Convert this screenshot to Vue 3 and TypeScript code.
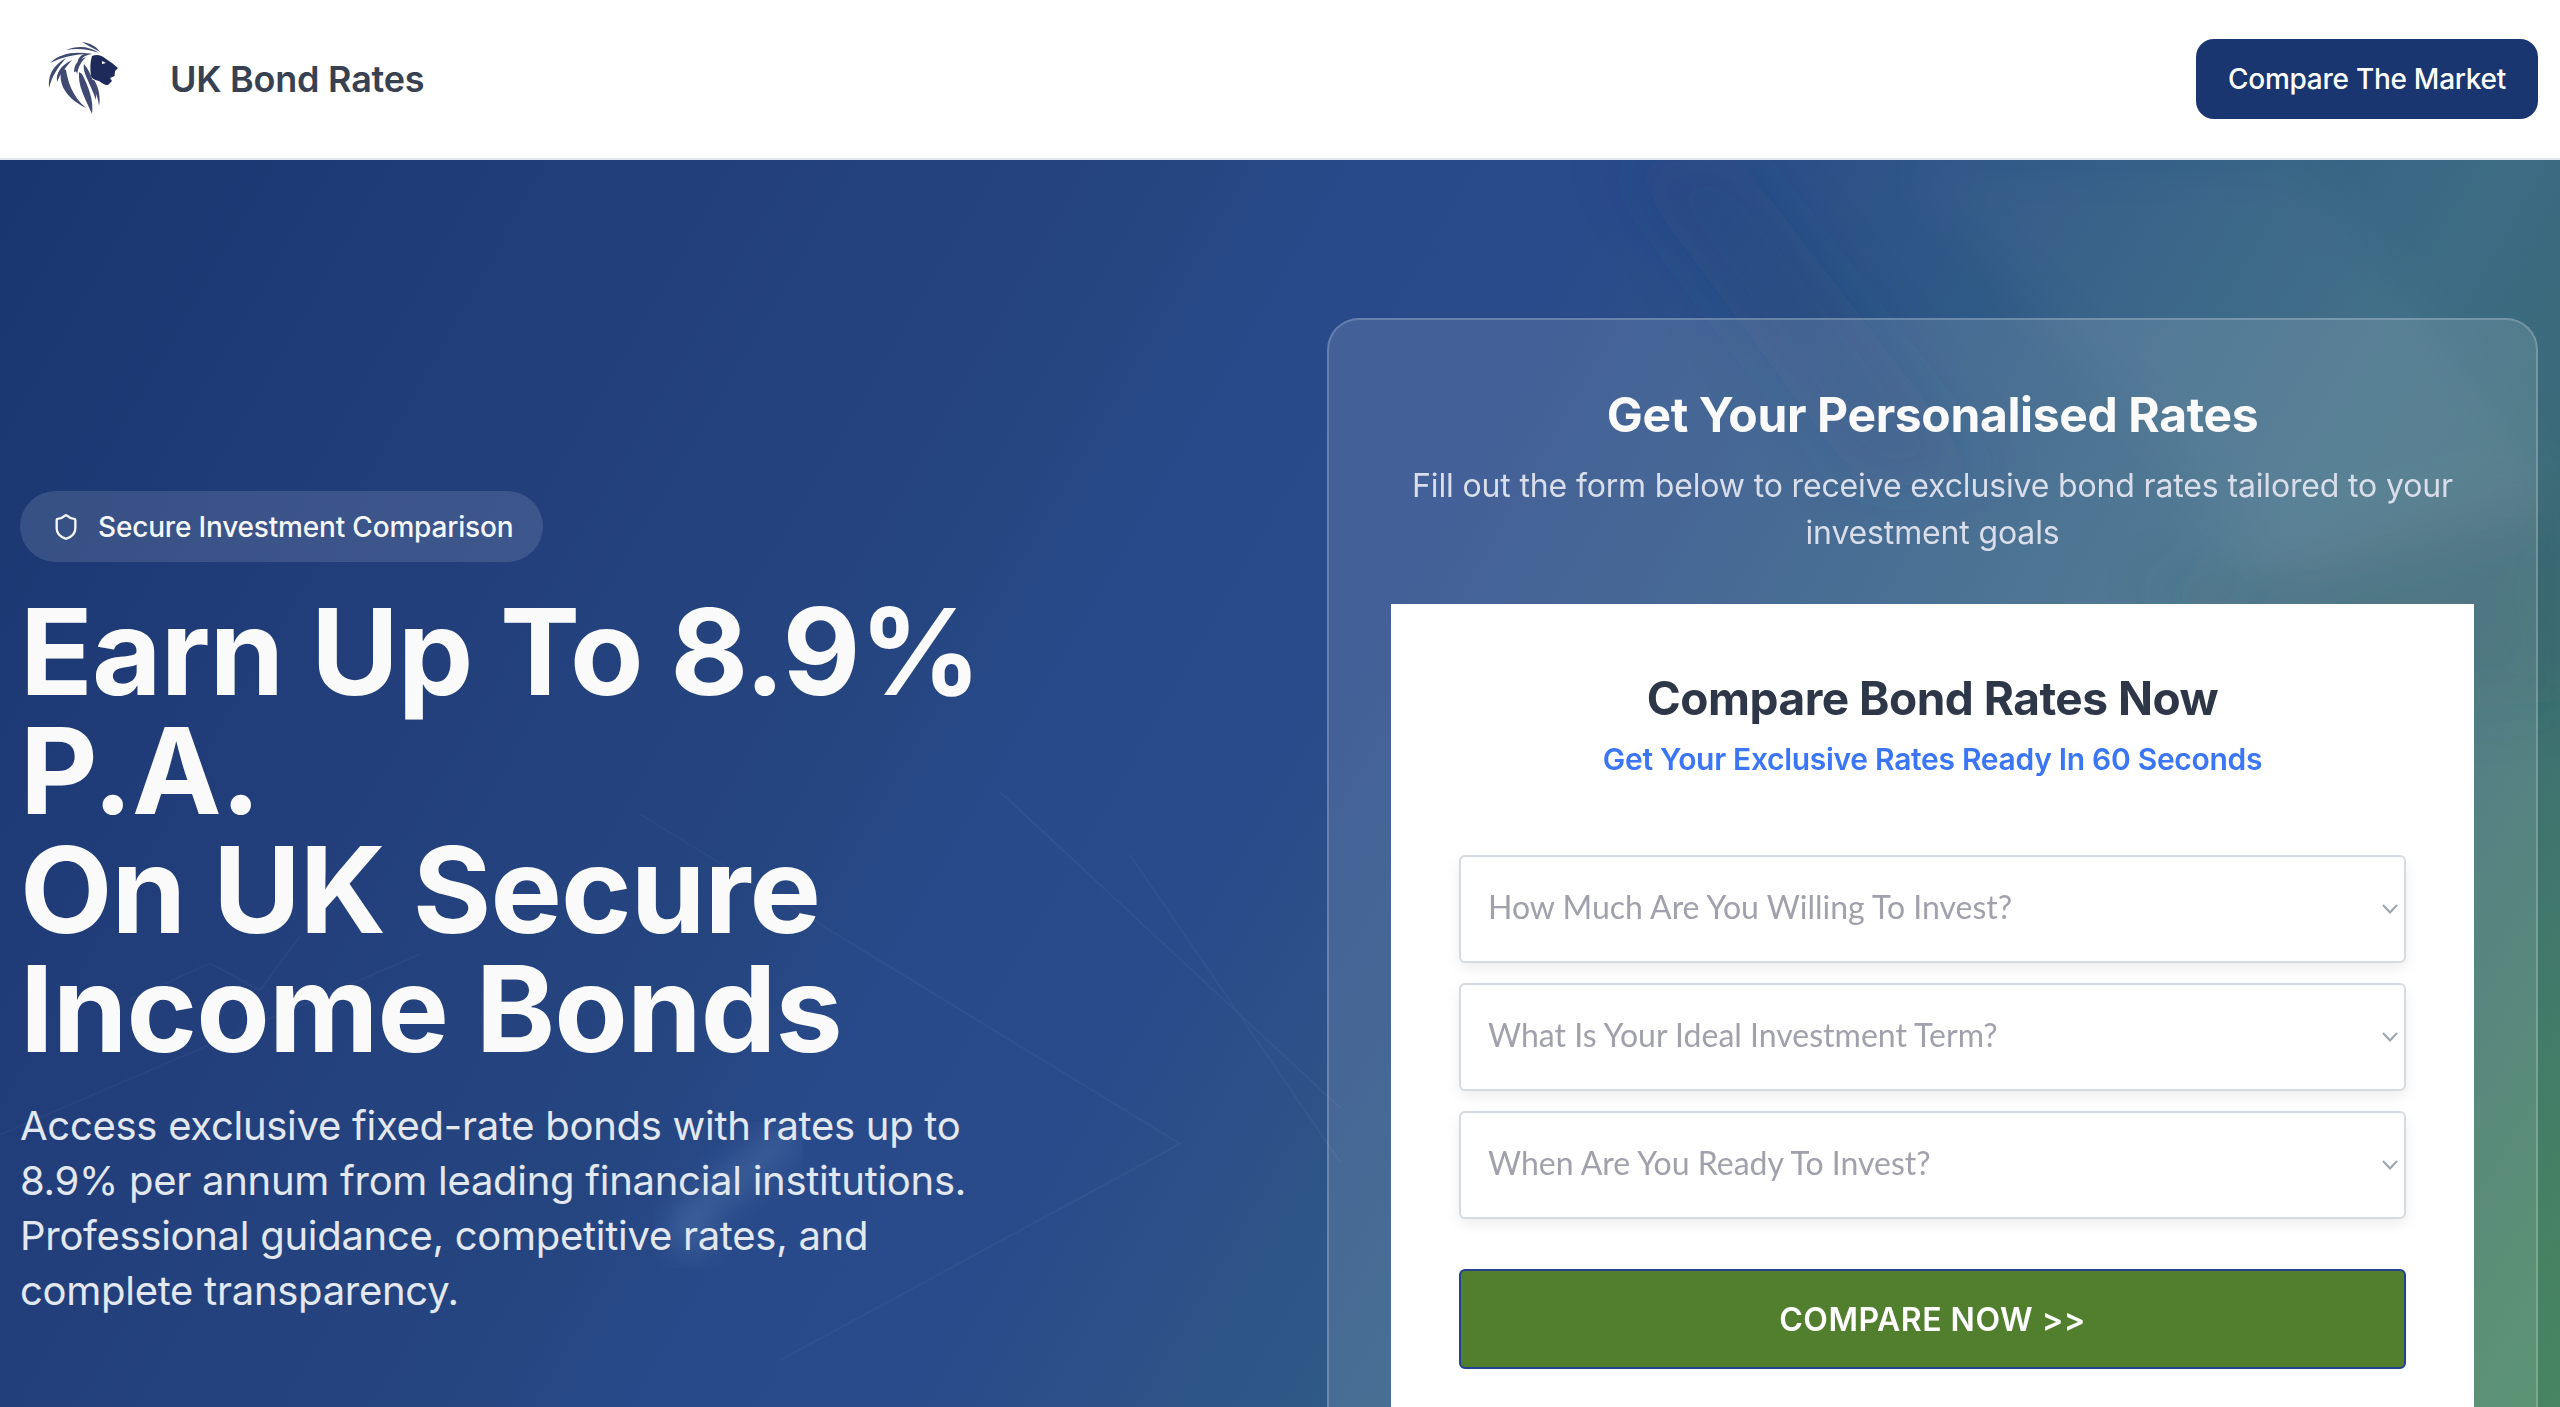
<script setup lang="ts">
const questions: string[] = [
  'How Much Are You Willing To Invest?',
  'What Is Your Ideal Investment Term?',
  'When Are You Ready To Invest?',
];
</script>

<template>
  <div class="page">
    <header class="topbar">
      <div class="brand">
        <svg class="logo" viewBox="0 4 100 90" fill="#1e2a5a">
          <!-- head -->
          <path d="M62 26 C66 24 72 25 76 29 L82 33 L88 38 L85 41 L84.500 46 L80 48 L82 51 L78 55 C74 55 72 53 69 51 C65 50 62 49 61 46 C60 40 60 32 62 26 Z" />
          <path d="M72 31 L76 33 L72 34 Z" fill="#ffffff" />
          <!-- mane -->
          <g opacity="0.85">
            <path d="M36 20 C46 16 58 15 69 23 C58 19 47 18 36 20 Z" />
            <path d="M52 12 C60 13 66 16 70 22 C63 18 57 15 52 12 Z" />
            <path d="M20 33 C30 23 46 21 60 24 C46 24 32 27 20 33 Z" />
            <path d="M48 35 C46 27 54 22 62 24 C55 25 50 28 50 35 Z" />
            <path d="M19 58 C18 46 22 36 36 28 C28 37 22 46 19 58 Z" />
            <path d="M27 52 C26 43 30 36 42 30 C35 38 30 44 27 52 Z" />
            <path d="M32 38 C28 50 32 66 56 78 C42 66 38 52 36 40 Z" />
            <path d="M44 42 C44 34 48 30 56 27 C50 33 48 38 47 45 C47 40 45 42 44 42 Z" />
            <path d="M49 42 C48 56 54 66 62 84 C64 70 58 56 52 44 Z" />
            <path d="M54 34 C52 42 60 52 66 70 C67 60 62 46 57 38 Z" />
            <path d="M60 50 C62 58 68 64 69 76 C71 66 68 56 64 50 Z" />
          </g>
        </svg>
        <span class="brand-name">UK Bond Rates</span>
      </div>
      <button class="market-btn">Compare The Market</button>
    </header>

    <section class="hero">
      <!-- faint chart photo behind the hero -->
      <svg class="hero-art" viewBox="0 0 2560 1652" preserveAspectRatio="none">
        <defs>
          <filter id="soft"><feGaussianBlur stdDeviation="14" /></filter>
          <filter id="softer"><feGaussianBlur stdDeviation="30" /></filter>
        </defs>
        <g filter="url(#softer)">
          <path d="M1620 0 L1740 0 L1990 360 L1860 360 Z" fill="#1c3a78" opacity="0.25" />
          <path d="M1900 0 L2300 0 L2520 300 L2560 400 L2300 480 Z" fill="#ffffff" opacity="0.04" />
          <path d="M2150 470 L2560 360 L2560 600 L2300 620 Z" fill="#1f4a5c" opacity="0.2" />
        </g>
        <g stroke="#ffffff" fill="none" opacity="0.03" stroke-width="2">
          <path d="M640 725 L1180 1090 L780 1330" />
          <path d="M1130 770 L1340 1110" />
          <path d="M1000 700 L1340 1050" />
          <path d="M0 1080 L420 880" />
          <path d="M130 930 L210 890 L260 920 L300 860" />
        </g>
        <g filter="url(#soft)">
          <path d="M680 1180 L790 1080" stroke="#5b80b8" stroke-width="34" opacity="0.35" />
          <circle cx="690" cy="1190" r="24" fill="#5b80b8" opacity="0.3" />
        </g>
      </svg>

      <div class="hero-copy">
        <div class="badge">
          <svg class="badge-icon" viewBox="0 0 24 24" fill="none" stroke="currentColor" stroke-width="2" stroke-linecap="round" stroke-linejoin="round">
            <path d="M20 13c0 5-3.500 7.500-7.660 8.950a1 1 0 0 1-.67-.01C7.500 20.500 4 18 4 13V6a1 1 0 0 1 1-1c2 0 4.500-1.200 6.240-2.720a1.170 1.170 0 0 1 1.520 0C14.510 3.810 17 5 19 5a1 1 0 0 1 1 1z" />
          </svg>
          <span>Secure Investment Comparison</span>
        </div>
        <h1 class="headline">Earn Up To 8.9% P.A.<br />On UK Secure Income Bonds</h1>
        <p class="lead">
          Access exclusive fixed-rate bonds with rates up to 8.9% per annum from leading financial
          institutions. Professional guidance, competitive rates, and complete transparency.
        </p>
      </div>

      <div class="glass-card">
        <h2 class="glass-title">Get Your Personalised Rates</h2>
        <p class="glass-sub">
          Fill out the form below to receive exclusive bond rates tailored to your investment goals
        </p>

        <form class="quote-form" @submit.prevent>
          <h3 class="form-title">Compare Bond Rates Now</h3>
          <p class="form-sub">Get Your Exclusive Rates Ready In 60 Seconds</p>

          <div class="fields">
            <div v-for="q in questions" :key="q" class="select-wrap">
              <select class="field">
                <option>{{ q }}</option>
              </select>
              <svg class="chevron" viewBox="0 0 16 10" fill="none" stroke="#9ca3af" stroke-width="2">
                <path d="M1 1 L8 8.500 L15 1" />
              </svg>
            </div>
          </div>

          <button class="submit-btn" type="submit">COMPARE NOW &gt;&gt;</button>
        </form>
      </div>
    </section>
  </div>
</template>

<style>
html,
body {
  margin: 0;
  height: 100%;
  overflow: hidden;
}
</style>

<style scoped>
.page {
  font-family: Inter, 'Liberation Sans', sans-serif;
  background: #ffffff;
}

/* Top bar */
.topbar {
  height: 158px;
  padding: 0 22px 0 30px;
  display: flex;
  align-items: center;
  justify-content: space-between;
  background: #ffffff;
  border-bottom: 2px solid #e2e5ea;
}

.brand {
  display: flex;
  align-items: center;
  gap: 40px;
}

.logo {
  width: 100px;
  height: 90px;
}

.brand-name {
  font-size: 36px;
  font-weight: 600;
  letter-spacing: -0.25px;
  color: #374151;
}

.market-btn {
  width: 342px;
  height: 80px;
  border: none;
  border-radius: 18px;
  background: #1a3670;
  color: #ffffff;
  font-family: inherit;
  font-size: 28px;
  font-weight: 500;
  letter-spacing: -0.27px;
}

/* Hero */
.hero {
  position: relative;
  padding: 158px 22px 158px 20px;
  display: flex;
  align-items: center;
  justify-content: space-between;
  background: linear-gradient(
    120deg,
    #1a3670 0%,
    #223f7c 20%,
    #254580 34%,
    #294a8a 40%,
    #2a4b8a 48%,
    #2f5986 60%,
    #3c6b84 73%,
    #3a6a78 80%,
    #468262 93%,
    #4a8a62 100%
  );
}

.hero-art {
  position: absolute;
  inset: 0;
  width: 100%;
  height: 100%;
}

.hero-copy {
  position: relative;
  width: 1000px;
  margin-bottom: 2px;
}

.badge {
  display: inline-flex;
  align-items: center;
  gap: 18px;
  height: 71px;
  padding: 0 30px 0 32px;
  border-radius: 36px;
  background: rgba(255, 255, 255, 0.12);
  color: #f5f7fa;
  font-size: 28px;
  font-weight: 500;
  letter-spacing: -0.18px;
}

.badge-icon {
  width: 28px;
  height: 32px;
}

.headline {
  margin: 30px 0 30px;
  font-size: 120px;
  line-height: 119px;
  font-weight: 700;
  letter-spacing: -0.9px;
  color: #fafafa;
}

.lead {
  margin: 0;
  font-size: 40px;
  line-height: 55px;
  letter-spacing: -0.28px;
  color: #e3e8f0;
}

/* Form card */
.glass-card {
  position: relative;
  box-sizing: border-box;
  width: 1211px;
  padding: 59px 62px 62px;
  border: 2px solid rgba(255, 255, 255, 0.2);
  border-radius: 32px;
  background: rgba(255, 255, 255, 0.12);
  text-align: center;
}

.glass-title {
  margin: 0 0 11px;
  font-size: 48px;
  line-height: 72px;
  font-weight: 700;
  letter-spacing: -0.37px;
  color: #fafafa;
}

.glass-sub {
  margin: 0 0 48px;
  font-size: 32px;
  line-height: 47px;
  letter-spacing: -0.15px;
  color: #d9deea;
}

.quote-form {
  padding: 66px 68px 60px;
  background: #ffffff;
}

.form-title {
  margin: 0 0 13px;
  font-size: 46px;
  line-height: 56px;
  font-weight: 700;
  letter-spacing: -0.5px;
  color: #2d3748;
}

.form-sub {
  margin: 0 0 76px;
  font-size: 30px;
  line-height: 40px;
  font-weight: 600;
  letter-spacing: -0.3px;
  color: #3b76f6;
}

.fields {
  display: flex;
  flex-direction: column;
  gap: 20px;
}

.select-wrap {
  position: relative;
}

.field {
  display: block;
  box-sizing: border-box;
  width: 100%;
  height: 108px;
  padding: 0 60px 6px 27px;
  border: 2px solid #d5d9e0;
  border-radius: 6px;
  background: #ffffff;
  box-shadow: 0 6px 14px rgba(0, 0, 0, 0.07);
  appearance: none;
  font-family: Lato, sans-serif;
  font-size: 32px;
  color: #a0a1ac;
}

.chevron {
  position: absolute;
  right: 8px;
  top: 49px;
  width: 16px;
  height: 10px;
}

.submit-btn {
  display: block;
  width: 100%;
  height: 100px;
  margin-top: 50px;
  border: 2px solid #24408f;
  border-radius: 6px;
  background: #527f2e;
  color: #ffffff;
  font-family: inherit;
  font-size: 32px;
  font-weight: 600;
  letter-spacing: 0.5px;
}
</style>
